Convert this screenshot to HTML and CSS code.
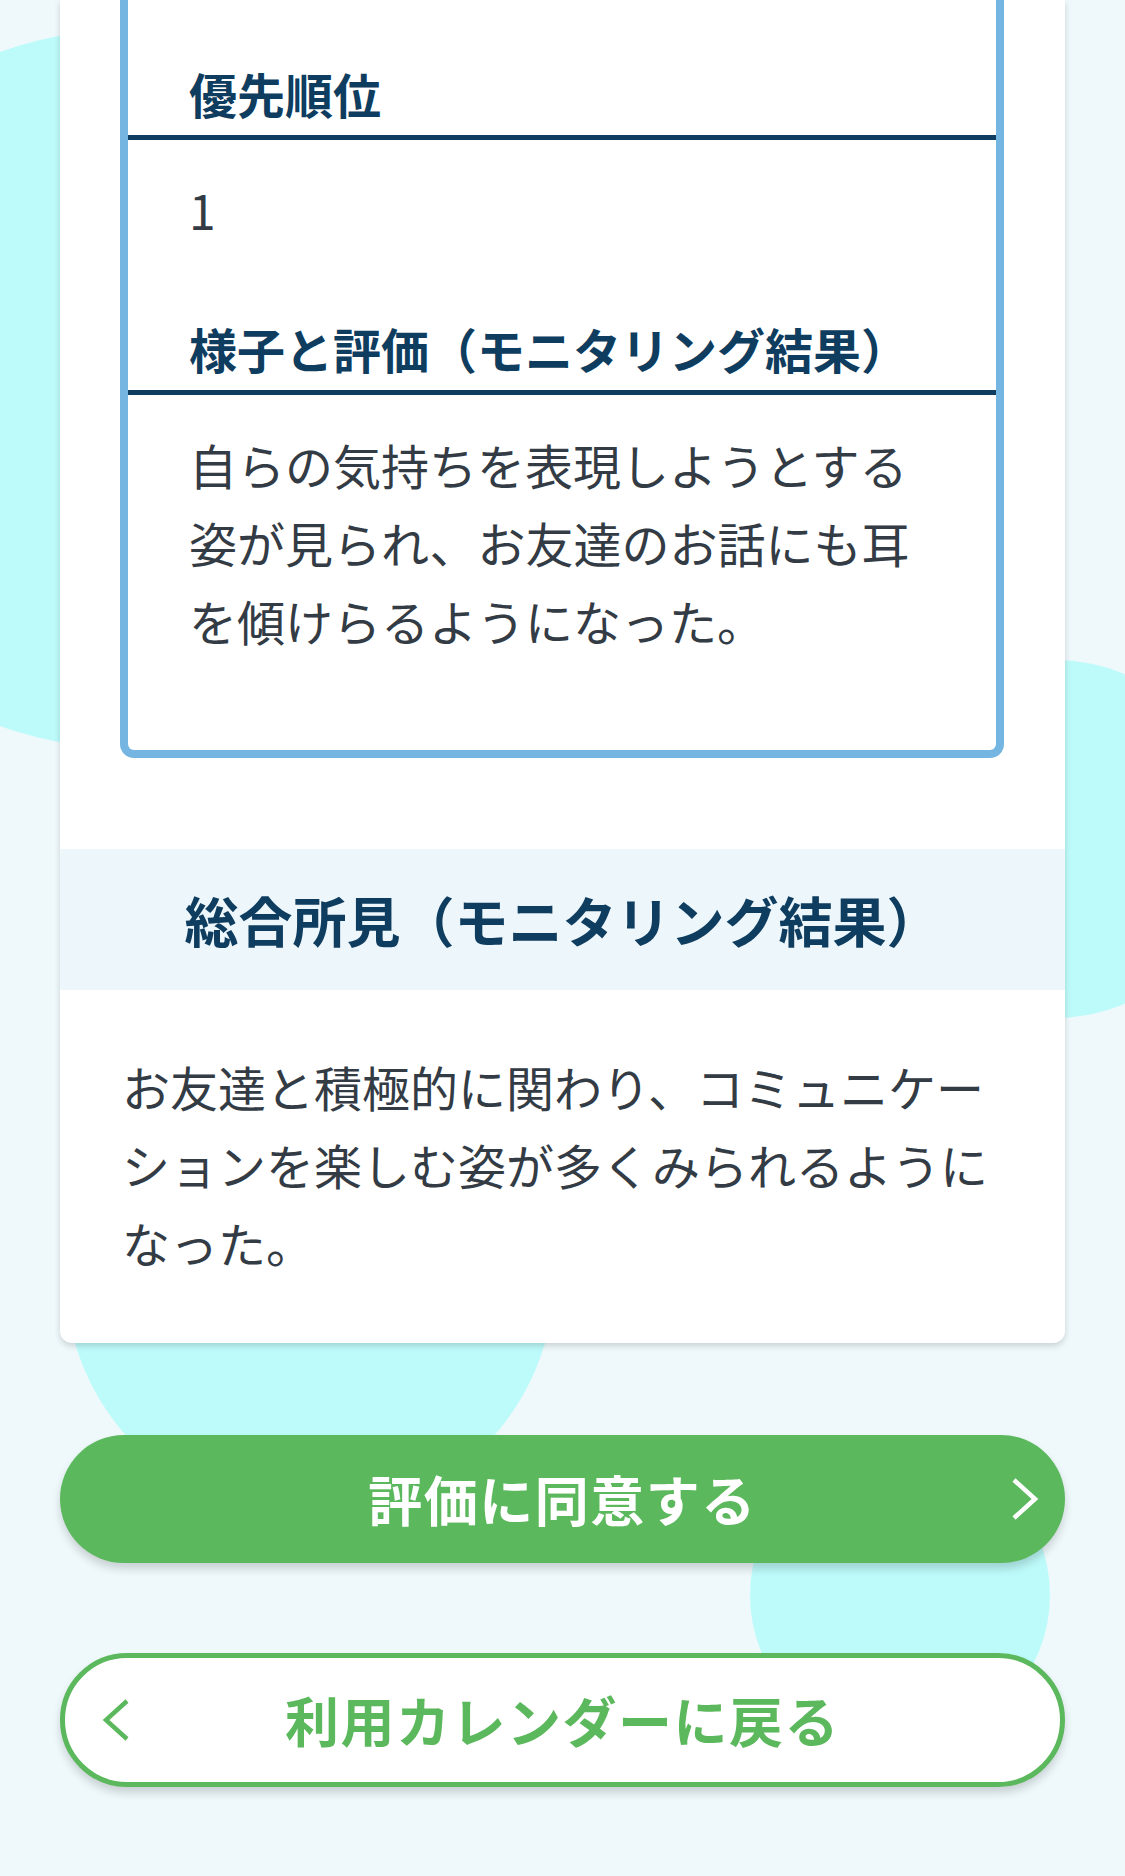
FILE: index.html
```html
<!DOCTYPE html>
<html lang="ja">
<head>
<meta charset="utf-8">
<title>モニタリング結果</title>
<link rel="stylesheet" href="styles.css">
</head>
<body>
<div class="page">
  <div class="bg" aria-hidden="true">
    <span class="blob blob-1"></span>
    <span class="blob blob-2"></span>
    <span class="blob blob-3"></span>
    <span class="blob blob-4"></span>
  </div>
  <main class="content">
    <section class="card">
      <div class="card-inner">
        <dl class="plan-box">
          <dt class="plan-label">優先順位</dt>
          <dd class="plan-value">1</dd>
          <dt class="plan-label">様子と評価（モニタリング結果）</dt>
          <dd class="plan-value">自らの気持ちを表現しようとする姿が見られ、お友達のお話にも耳を傾けらるようになった。</dd>
        </dl>
      </div>
      <h2 class="card-heading">総合所見（モニタリング結果）</h2>
      <p class="card-text">お友達と積極的に関わり、コミュニケーションを楽しむ姿が多くみられるようになった。</p>
    </section>
    <div class="actions">
      <button class="btn btn-primary" type="button">
        <span class="btn-side"></span>
        <span class="btn-label">評価に同意する</span>
        <span class="btn-side btn-side-right">
          <svg class="chev" width="28" height="44" viewBox="0 0 28 44"><polyline points="3,3 24,22 3,41" fill="none" stroke="#ffffff" stroke-width="4.5" stroke-linejoin="miter"/></svg>
        </span>
      </button>
      <button class="btn btn-outline" type="button">
        <span class="btn-side btn-side-left">
          <svg class="chev" width="28" height="44" viewBox="0 0 28 44"><polyline points="25,3 4,22 25,41" fill="none" stroke="#5cb85c" stroke-width="4.5" stroke-linejoin="miter"/></svg>
        </span>
        <span class="btn-label">利用カレンダーに戻る</span>
        <span class="btn-side"></span>
      </button>
    </div>
  </main>
</div>
</body>
</html>
```

FILE: styles.css
```css
* {
  box-sizing: border-box;
}

html, body {
  margin: 0;
  padding: 0;
}

body {
  background: #eff9fc;
  font-family: "Noto Sans CJK JP", "Noto Sans", sans-serif;
  color: #333b45;
  text-spacing-trim: space-all;
}

.page {
  position: relative;
  min-height: 1876px;
  overflow: hidden;
}

.bg {
  position: absolute;
  inset: 0;
  z-index: 0;
}

.blob {
  position: absolute;
  border-radius: 50%;
  background: #bdfbfa;
}

.blob-1 {
  left: -235px;
  top: 30px;
  width: 718px;
  height: 718px;
}

.blob-2 {
  left: 876px;
  top: 660px;
  width: 358px;
  height: 358px;
}

.blob-3 {
  left: 65px;
  top: 1029px;
  width: 490px;
  height: 490px;
}

.blob-4 {
  left: 750px;
  top: 1445px;
  width: 300px;
  height: 300px;
}

.content {
  position: relative;
  z-index: 1;
  padding: 0 60px 88px;
}

.card {
  background: #ffffff;
  border-radius: 0 0 12px 12px;
  box-shadow: 0 3px 6px rgba(0, 0, 0, 0.16);
  overflow: hidden;
}

.card-inner {
  padding: 0 61px 91px 60px;
}

.plan-box {
  margin: 0;
  padding: 63px 0 21px;
  border: 8px solid #74b5e1;
  border-top: none;
  border-radius: 0 0 14px 14px;
  background: #ffffff;
}

.plan-label {
  margin: 0;
  padding: 0 61px 12px;
  font-size: 48px;
  line-height: 60px;
  font-weight: 700;
  color: #0f3d60;
  border-bottom: 5px solid #0f3d60;
}

.plan-value {
  margin: 0 0 70px;
  padding: 30px 61px 0;
  font-size: 48px;
  line-height: 78px;
  color: #333b45;
}

.card-heading {
  margin: 0;
  padding: 33px 20px;
  background: #edf6fa;
  font-size: 54px;
  line-height: 75px;
  font-weight: 700;
  color: #0f3d60;
  text-align: center;
}

.card-text {
  margin: 0;
  padding: 57px 60px 62px 62px;
  font-size: 48px;
  line-height: 78px;
  color: #333b45;
}

.actions {
  display: flex;
  flex-direction: column;
  gap: 90px;
  margin-top: 92px;
}

.btn {
  display: grid;
  grid-template-columns: 1fr auto 1fr;
  align-items: center;
  width: 100%;
  margin: 0;
  padding: 0;
  border-radius: 80px;
  font-family: "Noto Sans CJK JP", "Noto Sans", sans-serif;
  font-size: 54px;
  font-weight: 700;
  line-height: 1;
  cursor: pointer;
  box-shadow: 0 6px 9px rgba(0, 0, 0, 0.16);
}

.btn-primary {
  height: 128px;
  background: #5cb85c;
  color: #ffffff;
  border: none;
}

.btn-outline {
  height: 134px;
  background: #ffffff;
  color: #5cb85c;
  border: 5px solid #5cb85c;
}

.btn-label {
  white-space: nowrap;
  letter-spacing: 1.5px;
}

.btn-side {
  display: flex;
  align-items: center;
}

.btn-side-right {
  justify-content: flex-end;
  padding-right: 26px;
}

.btn-side-left {
  justify-content: flex-start;
  padding-left: 37px;
}

.chev {
  display: block;
}
```
